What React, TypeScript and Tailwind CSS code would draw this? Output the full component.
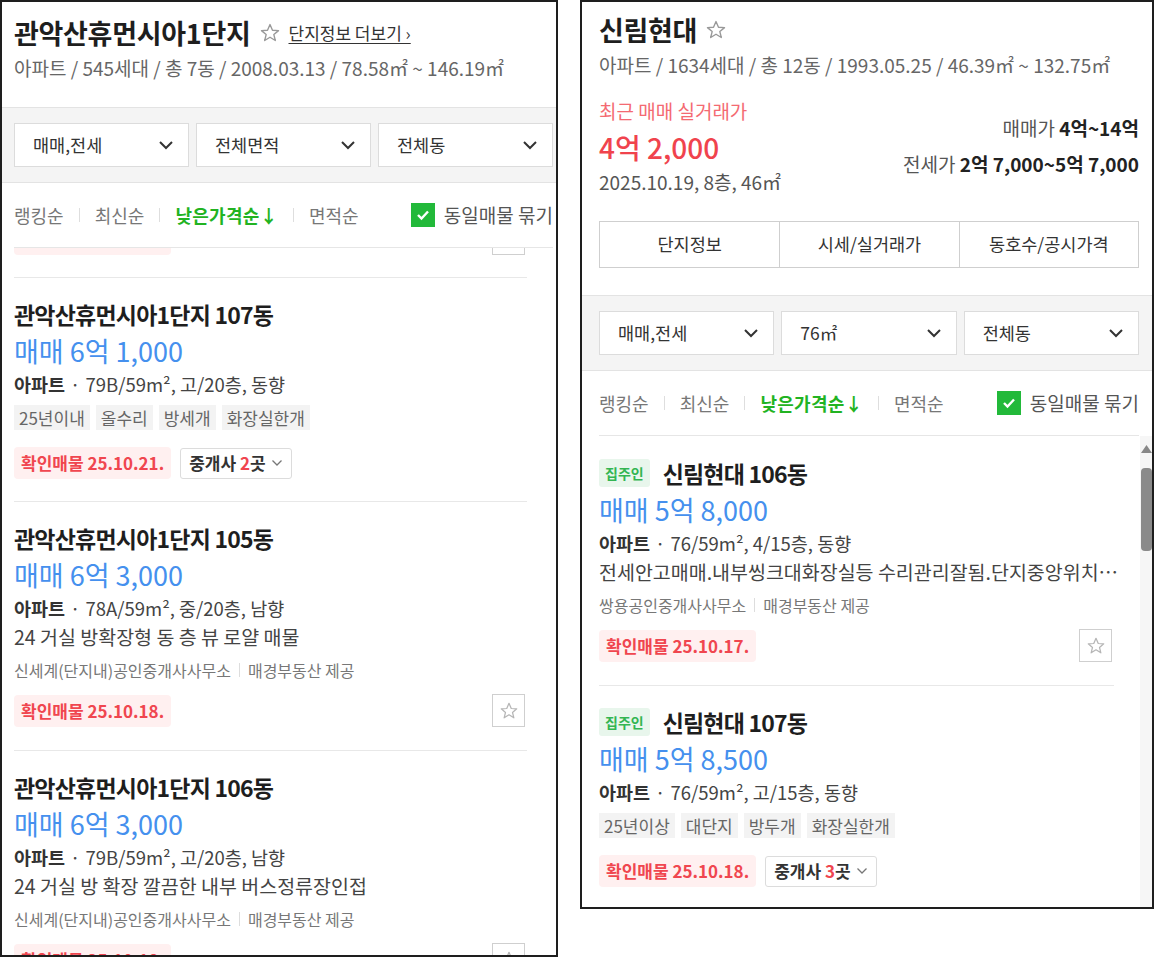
import React from "react";

const Star = ({ size = 20, color = "#9a9a9a" }: { size?: number; color?: string }) => (
  <svg width={size} height={size} viewBox="0 0 24 24" fill="none" stroke={color} strokeWidth={1.5} strokeLinejoin="round">
    <polygon points="12,2.8 14.7,9 21.3,9.4 16.2,13.7 17.8,20.2 12,16.6 6.2,20.2 7.8,13.7 2.7,9.4 9.3,9" />
  </svg>
);

const Chevron = () => (
  <svg width="16" height="10" viewBox="0 0 16 10" fill="none" stroke="#333" strokeWidth={2}>
    <polyline points="2,2 8,8 14,2" />
  </svg>
);

const SmallChevron = () => (
  <svg width="12" height="8" viewBox="0 0 12 8" fill="none" stroke="#777" strokeWidth={1.3}>
    <polyline points="1.5,1.5 6,6 10.5,1.5" />
  </svg>
);

const Dropdown = ({ label }: { label: string }) => (
  <div className="flex h-[44px] items-center justify-between border border-[#dcdcdc] bg-white pl-[18px] pr-[14px] text-[17.5px] text-[#333]">
    <span>{label}</span>
    <Chevron />
  </div>
);

const Sep = () => <span className="mx-[15px] h-[14px] w-px bg-[#dedede]" />;

const SortRow = () => (
  <div className="flex h-[65px] items-center border-b border-[#e6e6e6] text-[18px]">
    <span className="text-[#777]">랭킹순</span>
    <Sep />
    <span className="text-[#777]">최신순</span>
    <Sep />
    <span className="font-bold tracking-[0.3px] text-[#22b322]">낮은가격순↓</span>
    <Sep />
    <span className="text-[#777]">면적순</span>
    <div className="ml-auto flex items-center gap-[9px]">
      <span className="flex h-[24px] w-[24px] items-center justify-center bg-[#22b93a]">
        <svg width="14" height="12" viewBox="0 0 14 12" fill="none" stroke="#fff" strokeWidth={2.4}>
          <polyline points="2,6 5.5,9.5 12,2.5" />
        </svg>
      </span>
      <span className="whitespace-nowrap text-[19px] text-[#555]">동일매물 묶기</span>
    </div>
  </div>
);

type Item = {
  owner?: boolean;
  title: string;
  price: string;
  detail: string;
  tags?: string[];
  desc?: string;
  agent?: string;
  badge: string;
  brokers?: number;
};

const Listing = ({ item, first }: { item: Item; first?: boolean }) => (
  <div
    className={`${first ? "pt-[19px]" : "border-t border-[#e8e8e8] pt-[18px]"} ${item.brokers ? "pb-[22px]" : "pb-[23px]"}`}
  >
    <div className="flex h-[36px] items-center">
      {item.owner && (
        <span className="mr-[13px] flex h-[28px] items-center rounded-[3px] bg-[#e8f6ec] px-[6px] text-[14px] font-bold text-[#33b552]">
          집주인
        </span>
      )}
      <span className="text-[23px] font-bold tracking-[-0.8px] text-[#1e1e1e]">{item.title}</span>
    </div>
    <div className="h-[38px] text-[27px] leading-[38px] text-[#4590ee]">{item.price}</div>
    <div className="flex h-[30px] items-center whitespace-nowrap text-[18.5px] text-[#444]">
      <span className="font-bold text-[#333]">아파트</span>
      <span className="mx-[5px]">·</span>
      <span>{item.detail}</span>
    </div>
    {item.tags && (
      <div className="mt-[5px] flex gap-[6px]">
        {item.tags.map((t) => (
          <span key={t} className="flex h-[25px] items-center bg-[#f3f3f3] px-[5px] text-[17px] text-[#666]">
            {t}
          </span>
        ))}
      </div>
    )}
    {item.desc && <div className="h-[26px] whitespace-nowrap text-[19.5px] leading-[26px] text-[#444]">{item.desc}</div>}
    {item.agent && (
      <div className="mt-[5px] flex h-[30px] items-center whitespace-nowrap text-[16px] text-[#777]">
        <span>{item.agent}</span>
        <span className="mx-[8px] h-[14px] w-px bg-[#ddd]" />
        <span>매경부동산 제공</span>
      </div>
    )}
    <div className={`${item.brokers ? "mt-[17px]" : "mt-[9px]"} flex items-center`}>
      <span className="flex h-[32px] items-center rounded-[4px] bg-[#fff0f0] px-[7px] text-[17px] font-bold text-[#f0464f]">
        {item.badge}
      </span>
      {item.brokers ? (
        <span className="ml-[9px] flex h-[31px] items-center gap-[5px] rounded-[3px] border border-[#dcdcdc] px-[8px] text-[17px] font-bold text-[#333]">
          <span>
            중개사 <span className="text-[#f0464f]">{item.brokers}</span>곳
          </span>
          <SmallChevron />
        </span>
      ) : (
        <span className="ml-auto mr-[2px] flex h-[33px] w-[33px] items-center justify-center border border-[#cfcfcf]">
          <Star size={20} color="#b5b5b5" />
        </span>
      )}
    </div>
  </div>
);

const leftItems: Item[] = [
  {
    title: "관악산휴먼시아1단지 107동",
    price: "매매 6억 1,000",
    detail: "79B/59m², 고/20층, 동향",
    tags: ["25년이내", "올수리", "방세개", "화장실한개"],
    badge: "확인매물 25.10.21.",
    brokers: 2,
  },
  {
    title: "관악산휴먼시아1단지 105동",
    price: "매매 6억 3,000",
    detail: "78A/59m², 중/20층, 남향",
    desc: "24 거실 방확장형 동 층 뷰 로얄 매물",
    agent: "신세계(단지내)공인중개사사무소",
    badge: "확인매물 25.10.18.",
  },
  {
    title: "관악산휴먼시아1단지 106동",
    price: "매매 6억 3,000",
    detail: "79B/59m², 고/20층, 남향",
    desc: "24 거실 방 확장 깔끔한 내부 버스정류장인접",
    agent: "신세계(단지내)공인중개사사무소",
    badge: "확인매물 25.10.18.",
  },
];

const rightItems: Item[] = [
  {
    owner: true,
    title: "신림현대 106동",
    price: "매매 5억 8,000",
    detail: "76/59m², 4/15층, 동향",
    desc: "전세안고매매.내부씽크대화장실등 수리관리잘됨.단지중앙위치…",
    agent: "쌍용공인중개사사무소",
    badge: "확인매물 25.10.17.",
  },
  {
    owner: true,
    title: "신림현대 107동",
    price: "매매 5억 8,500",
    detail: "76/59m², 고/15층, 동향",
    tags: ["25년이상", "대단지", "방두개", "화장실한개"],
    badge: "확인매물 25.10.18.",
    brokers: 3,
  },
];

export default function App() {
  return (
    <div className="flex h-[957px] w-[1154px] gap-[22px] overflow-hidden bg-white font-['Noto_Sans_CJK_KR',sans-serif]">
      {/* Left panel */}
      <div className="flex h-[957px] w-[558px] shrink-0 flex-col overflow-hidden border-2 border-[#1e1e1e]">
        <div className="pb-[24px] pl-[12px] pr-[3px] pt-[11px]">
          <div className="flex h-[40px] items-center">
            <span className="text-[27px] font-bold tracking-[-0.3px] text-[#1e1e1e]">관악산휴먼시아1단지</span>
            <span className="ml-[8px]">
              <Star size={22} color="#999" />
            </span>
            <span className="ml-[8px] text-[17px] text-[#333] underline underline-offset-[3px]">단지정보 더보기 ›</span>
          </div>
          <div className="h-[30px] whitespace-nowrap text-[19px] leading-[30px] text-[#666]">
            아파트 / 545세대 / 총 7동 / 2008.03.13 / 78.58㎡ ~ 146.19㎡
          </div>
        </div>
        <div className="grid grid-cols-3 gap-[7px] border-y border-[#e3e3e3] bg-[#f4f4f4] py-[15px] pl-[12px] pr-[3px]">
          <Dropdown label="매매,전세" />
          <Dropdown label="전체면적" />
          <Dropdown label="전체동" />
        </div>
        <div className="pl-[12px] pr-[3px]">
          <SortRow />
        </div>
        <div className="flex-1 overflow-hidden pl-[12px] pr-[29px]">
          {/* bottom edge of the previous (scrolled-away) listing */}
          <div className="-mt-[26px] flex items-end pb-[22px]">
            <span className="h-[32px] w-[157px] rounded-[4px] bg-[#fff0f0]" />
            <span className="ml-auto mr-[2px] h-[33px] w-[33px] border border-[#cfcfcf]" />
          </div>
          {leftItems.map((it) => (
            <Listing key={it.title} item={it} />
          ))}
        </div>
      </div>

      {/* Right panel */}
      <div className="flex h-[909px] w-[574px] shrink-0 flex-col overflow-hidden border-2 border-[#1e1e1e]">
        <div className="pb-[27px] pl-[17px] pr-[13px] pt-[8px]">
          <div className="flex h-[40px] items-center">
            <span className="text-[27px] font-bold tracking-[-0.3px] text-[#1e1e1e]">신림현대</span>
            <span className="ml-[8px]">
              <Star size={22} color="#999" />
            </span>
          </div>
          <div className="h-[30px] whitespace-nowrap text-[19px] leading-[30px] text-[#666]">
            아파트 / 1634세대 / 총 12동 / 1993.05.25 / 46.39㎡ ~ 132.75㎡
          </div>
          <div className="mt-[18px] flex items-center justify-between">
            <div className="flex flex-col">
              <span className="h-[26px] text-[19px] leading-[26px] text-[#f46a72]">최근 매매 실거래가</span>
              <span className="h-[46px] text-[28px] font-medium leading-[46px] text-[#f0434d]">4억 2,000</span>
              <span className="h-[24px] text-[19px] leading-[24px] text-[#555]">2025.10.19, 8층, 46㎡</span>
            </div>
            <div className="flex flex-col items-end text-[19px]">
              <span className="h-[36px] leading-[36px] text-[#555]">
                매매가 <span className="font-bold text-[#222]">4억~14억</span>
              </span>
              <span className="h-[36px] leading-[36px] text-[#555]">
                전세가 <span className="font-bold text-[#222]">2억 7,000~5억 7,000</span>
              </span>
            </div>
          </div>
          <div className="mt-[27px] grid h-[47px] grid-cols-3 border border-[#cfcfcf] text-[17.5px] text-[#333]">
            <div className="flex items-center justify-center">단지정보</div>
            <div className="flex items-center justify-center border-l border-[#cfcfcf]">시세/실거래가</div>
            <div className="flex items-center justify-center border-l border-[#cfcfcf]">동호수/공시가격</div>
          </div>
        </div>
        <div className="grid grid-cols-3 gap-[7px] border-y border-[#e3e3e3] bg-[#f4f4f4] py-[15px] pl-[17px] pr-[13px]">
          <Dropdown label="매매,전세" />
          <Dropdown label="76㎡" />
          <Dropdown label="전체동" />
        </div>
        <div className="pl-[17px] pr-[13px]">
          <SortRow />
        </div>
        <div className="flex min-h-0 flex-1 overflow-hidden">
          <div className="min-w-0 flex-1 pl-[17px] pr-[26px]">
            {rightItems.map((it, i) => (
              <Listing key={it.title} item={it} first={i === 0} />
            ))}
          </div>
          <div className="flex w-[12px] shrink-0 flex-col items-center bg-[#f6f6f6] pt-[9px]">
            <svg width="11" height="8" viewBox="0 0 11 8">
              <polygon points="5.5,0 11,8 0,8" fill="#888" />
            </svg>
            <div className="mt-[15px] h-[83px] w-[11px] rounded-[4px] bg-[#8a8a8a]" />
          </div>
        </div>
      </div>
    </div>
  );
}
